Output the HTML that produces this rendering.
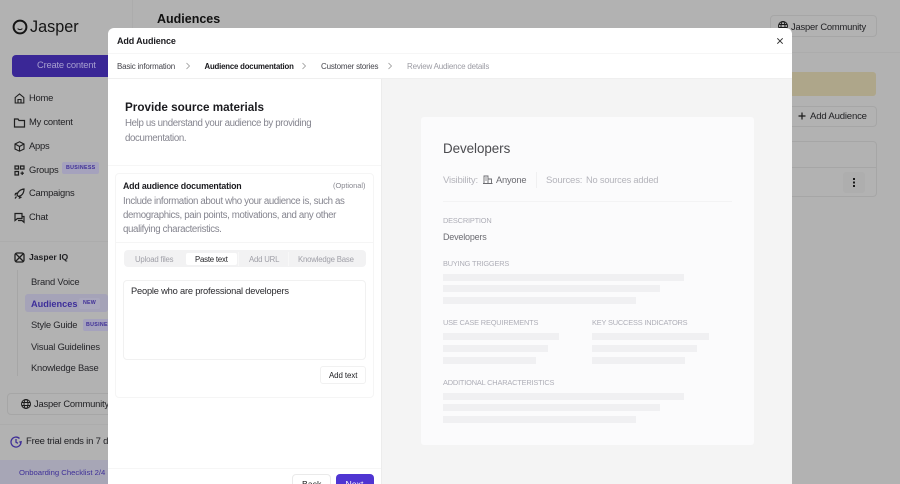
<!DOCTYPE html>
<html style="height:484px;overflow:hidden"><head><meta charset="utf-8"><style>
html,body{margin:0;padding:0}
body{width:900px;height:484px;overflow:hidden;font-family:"Liberation Sans",sans-serif;color:#232323}
#w{position:relative;width:900px;height:484px;overflow:hidden;background:#b2b2b2}
.a{position:absolute;white-space:nowrap;line-height:1}
.b{position:absolute;box-sizing:border-box}
.nav{font-size:9.4px;color:#1f1f22;letter-spacing:-.22px;left:29px}
.sub{font-size:9.4px;color:#26262a;letter-spacing:-.2px;left:31px}
.tab{font-size:8px;letter-spacing:-.2px;top:63px}
.in{font-size:7.8px;letter-spacing:-.2px;top:256px;color:#a0a0a8}
.gr{color:#85858f;font-size:9.7px;letter-spacing:-.36px}
.lab{font-size:7.4px;letter-spacing:-.18px;color:#aeaeb7}
.sk{position:absolute;background:#f0f0f2;height:7px}
svg{position:absolute;fill:none}
</style></head><body><div id="w">
<!-- background -->
<div class="b" style="left:132px;top:0;width:1px;height:484px;background:#acacac"></div>
<div class="b" style="left:133px;top:52px;width:767px;height:1px;background:#acacac"></div>
<div class="b" style="left:0;top:241px;width:133px;height:1px;background:#acacac"></div>
<div class="b" style="left:0;top:424px;width:133px;height:1px;background:#acacac"></div>
<svg style="left:12px;top:19px" width="16" height="16" viewBox="0 0 16 16"><circle cx="8" cy="8" r="6.4" stroke="#151515" stroke-width="2"/><path d="M5.6 9.6q2.4 2 4.8 0" stroke="#151515" stroke-width="1"/></svg>
<div class="a" style="left:30px;top:19px;font-size:16.2px;color:#141414">Jasper</div>
<div class="a" style="left:157px;top:12.5px;font-size:12.5px;font-weight:bold;color:#111">Audiences</div>
<div class="b" style="left:12px;top:55px;width:100px;height:22px;background:#3a2796;border-radius:4px"></div>
<div class="a" style="left:37px;top:60.3px;font-size:9.4px;letter-spacing:-.2px;color:#a79fd0">Create content</div>

<svg style="left:13px;top:92px" width="13" height="13" viewBox="0 0 13 13" stroke="#1f1f1f" stroke-width="1.1"><path d="M2.2 5.5 6.5 2l4.3 3.5V11H2.200zM5 11V7.500h3V11"/></svg>
<div class="a nav" style="top:93.3px">Home</div>
<svg style="left:13px;top:116px" width="13" height="13" viewBox="0 0 13 13" stroke="#1f1f1f" stroke-width="1.2"><path d="M1.500 3h3.500l1 1.500h5.500V11h-10z"/></svg>
<div class="a nav" style="top:117.3px">My content</div>
<svg style="left:13px;top:140px" width="13" height="13" viewBox="0 0 13 13" stroke="#1f1f1f" stroke-width="1.1"><path d="M6.500 1.800 11 4v5l-4.500 2.200L2 9V4zM2 4l4.500 2.500L11 4M6.500 6.500v4.700"/></svg>
<div class="a nav" style="top:141.3px">Apps</div>
<svg style="left:13px;top:164px" width="13" height="13" viewBox="0 0 13 13" stroke="#1f1f1f" stroke-width="1.2"><path d="M2 2h3.500v3H2zM7.500 2H11v3H7.500zM2 7.500h3.500V11H2zM7.500 9.200H11M9.200 7.500V11"/></svg>
<div class="a nav" style="top:165.3px">Groups</div>
<div class="b" style="left:62px;top:162px;width:37px;height:12px;background:#a5a2bd;border-radius:2px"></div>
<div class="a" style="left:66px;top:165.5px;font-size:5.3px;font-weight:bold;color:#3f2f97;letter-spacing:.3px">BUSINESS</div>
<svg style="left:13px;top:187px" width="13" height="13" viewBox="0 0 13 13" stroke="#1f1f1f" stroke-width="1.2"><path d="M11 2C7 2.500 4.500 5 4 8l1.500 1.500c3-.5 5.500-3 5.500-7.500zM4.500 6 2.500 6.500 2 8.500M7 9l-.5 2 2-.8M3.500 9.500 2 11.500"/></svg>
<div class="a nav" style="top:188.3px">Campaigns</div>
<svg style="left:13px;top:211px" width="13" height="13" viewBox="0 0 13 13" stroke="#1f1f1f" stroke-width="1.2"><path d="M2 2.500h7v5H4.500L2 9.500zM5 9.500h4l2 1.800V5.500H9.500"/></svg>
<div class="a nav" style="top:212.3px">Chat</div>

<svg style="left:13px;top:251px" width="13" height="13" viewBox="0 0 13 13" stroke="#1f1f1f" stroke-width="1.300"><rect x="2" y="2" width="9" height="9" rx="2"/><path d="M2.500 2.500l8 8M10.500 2.500l-8 8"/></svg>
<div class="a" style="left:29px;top:252.7px;font-size:8.6px;font-weight:bold;color:#1f1f22">Jasper IQ</div>
<div class="b" style="left:17px;top:270px;width:1px;height:106px;background:#a6a6a6"></div>
<div class="a sub" style="top:277px">Brand Voice</div>
<div class="b" style="left:25px;top:294px;width:83px;height:18px;background:#a5a3b8;border-radius:3px"></div>
<div class="a" style="left:31px;top:299.8px;font-size:9.2px;font-weight:bold;color:#3d2e9a">Audiences</div>
<div class="b" style="left:79px;top:298px;width:21px;height:11px;background:#aaa8bd;border-radius:2px"></div>
<div class="a" style="left:83px;top:301px;font-size:5.3px;font-weight:bold;color:#3f2f97;letter-spacing:.2px">NEW</div>
<div class="a sub" style="top:320px">Style Guide</div>
<div class="b" style="left:83px;top:319px;width:25px;height:12px;background:#a5a2bd;border-radius:2px 0 0 2px"></div>
<div class="a" style="left:86px;top:322.5px;font-size:5.3px;font-weight:bold;color:#3f2f97;letter-spacing:.3px">BUSINESS</div>
<div class="a sub" style="top:341.5px">Visual Guidelines</div>
<div class="a sub" style="top:363px">Knowledge Base</div>

<div class="b" style="left:7px;top:393px;width:110px;height:22px;border:1px solid #a6a6a6;border-radius:4px"></div>
<svg style="left:20px;top:398px" width="12" height="12" viewBox="0 0 12 12" stroke="#1a1a1a" stroke-width="1"><circle cx="6" cy="6" r="4.500"/><ellipse cx="6" cy="6" rx="2" ry="4.500"/><path d="M1.500 4.500h9M1.500 7.500h9"/></svg>
<div class="a" style="left:34px;top:399.3px;font-size:9.4px;letter-spacing:-.2px;color:#1f1f22">Jasper Community</div>
<svg style="left:9px;top:435px" width="14" height="14" viewBox="0 0 14 14" stroke="#3f2f97" stroke-width="1.300"><path d="M12 7a5 5 0 1 1-1.500-3.500M7 4v3.200l2 1.100M12 8.500l-1-1.500 1.800-.5"/></svg>
<div class="a" style="left:26px;top:436.8px;font-size:9.5px;letter-spacing:-.2px;color:#202024">Free trial ends in 7 days</div>
<div class="b" style="left:0;top:460px;width:108px;height:24px;background:#a7a6b6"></div>
<div class="a" style="left:19px;top:469px;font-size:7.7px;color:#3f3098">Onboarding Checklist 2/4</div>

<div class="b" style="left:770px;top:15px;width:107px;height:22px;border:1px solid #a6a6a6;border-radius:4px"></div>
<svg style="left:777px;top:20px" width="12" height="12" viewBox="0 0 12 12" stroke="#1a1a1a" stroke-width="1"><circle cx="6" cy="6" r="4.500"/><ellipse cx="6" cy="6" rx="2" ry="4.500"/><path d="M1.500 4.500h9M1.500 7.500h9"/></svg>
<div class="a" style="left:791px;top:21.8px;font-size:9.4px;letter-spacing:-.2px;color:#1f1f22">Jasper Community</div>
<div class="b" style="left:780px;top:72px;width:96px;height:24px;background:#aea68a;border-radius:3px"></div>
<div class="b" style="left:780px;top:106px;width:97px;height:21px;border:1px solid #a6a6a6;border-radius:4px"></div>
<svg style="left:796px;top:110px" width="12" height="12" viewBox="0 0 12 12" stroke="#1a1a1a" stroke-width="1.200"><path d="M6 2.500v7M2.500 6h7"/></svg>
<div class="a" style="left:810px;top:112px;font-size:9.6px;letter-spacing:-.2px;color:#1f1f22">Add Audience</div>
<div class="b" style="left:770px;top:141px;width:107px;height:56px;border:1px solid #a6a6a6;border-radius:4px"></div>
<div class="b" style="left:780px;top:167px;width:97px;height:1px;background:#a6a6a6"></div>
<div class="b" style="left:843px;top:172px;width:22px;height:21px;background:#aeaeae;border-radius:3px"></div>
<div class="b" style="left:853px;top:178px;width:2px;height:2px;background:#1a1a1a;box-shadow:0 3.500px 0 #1a1a1a,0 7px 0 #1a1a1a"></div>

<!-- modal -->
<div class="b" style="left:108px;top:28px;width:684px;height:456px;background:#fff;border-radius:6px 6px 0 0;overflow:hidden">
<div class="b" style="left:0;top:25px;width:684px;height:1px;background:#f6f6f6"></div>
<div class="b" style="left:0;top:50px;width:684px;height:1px;background:#efefef"></div>
<div class="b" style="left:273px;top:51px;width:411px;height:405px;background:#f4f4f4;border-left:1px solid #ececec"></div>
</div>
<div class="a" style="left:117px;top:36.5px;font-size:9px;letter-spacing:-.12px;font-weight:bold;color:#1b1b1f">Add Audience</div>
<svg style="left:775px;top:36px" width="10" height="10" viewBox="0 0 10 10" stroke="#333" stroke-width="1"><path d="M2.300 2.300l5.400 5.400M7.700 2.300l-5.400 5.400"/></svg>

<div class="a tab" style="left:117px;color:#45454c">Basic information</div>
<svg style="left:184px;top:62px" width="8" height="8" viewBox="0 0 8 8" stroke="#999" stroke-width=".8"><path d="M2.500 1 5.500 4 2.500 7"/></svg>
<div class="a tab" style="left:204.5px;font-weight:bold;color:#17171b;font-size:7.8px;letter-spacing:-.18px">Audience documentation</div>
<svg style="left:300px;top:62px" width="8" height="8" viewBox="0 0 8 8" stroke="#999" stroke-width=".8"><path d="M2.500 1 5.500 4 2.500 7"/></svg>
<div class="a tab" style="left:321px;color:#45454c">Customer stories</div>
<svg style="left:386px;top:62px" width="8" height="8" viewBox="0 0 8 8" stroke="#999" stroke-width=".8"><path d="M2.500 1 5.500 4 2.500 7"/></svg>
<div class="a tab" style="left:407px;color:#9c9ca4">Review Audience details</div>

<!-- left panel -->
<div class="a" style="left:125px;top:102px;font-size:11.7px;font-weight:bold;color:#1b1b1f">Provide source materials</div>
<div class="a gr" style="left:125px;top:119.3px">Help us understand your audience by providing</div>
<div class="a gr" style="left:125px;top:133.8px">documentation.</div>
<div class="b" style="left:108px;top:165px;width:273px;height:1px;background:#f6f6f6"></div>
<div class="b" style="left:115px;top:173px;width:259px;height:225px;border:1px solid #f5f5f5;border-radius:4px"></div>
<div class="a" style="left:123px;top:181.5px;font-size:8.8px;letter-spacing:-.18px;font-weight:bold;color:#1b1b1f">Add audience documentation</div>
<div class="a" style="left:333px;top:182.3px;font-size:7.4px;color:#888890">(Optional)</div>
<div class="a gr" style="left:123px;top:196.8px">Include information about who your audience is, such as</div>
<div class="a gr" style="left:123px;top:211.3px">demographics, pain points, motivations, and any other</div>
<div class="a gr" style="left:123px;top:225.3px">qualifying characteristics.</div>
<div class="b" style="left:116px;top:242px;width:257px;height:1px;background:#f5f5f5"></div>
<div class="b" style="left:124px;top:250px;width:242px;height:17px;background:#f2f2f3;border-radius:4px"></div>
<div class="b" style="left:186px;top:253px;width:51px;height:12px;background:#fff;border-radius:2px"></div>
<div class="b" style="left:238px;top:252px;width:1px;height:14px;background:#f8f8f8"></div>
<div class="b" style="left:288px;top:252px;width:1px;height:14px;background:#f8f8f8"></div>
<div class="a in" style="left:135px">Upload files</div>
<div class="a in" style="left:195px;color:#1f1f23">Paste text</div>
<div class="a in" style="left:249px">Add URL</div>
<div class="a in" style="left:298px">Knowledge Base</div>
<div class="b" style="left:123px;top:280px;width:243px;height:80px;border:1px solid #f1f1f1;border-radius:4px"></div>
<div class="a" style="left:131px;top:287.3px;font-size:9.3px;letter-spacing:-.2px;color:#2a2a2e">People who are professional developers</div>
<div class="b" style="left:320px;top:366px;width:46px;height:18px;border:1px solid #f1f1f1;border-radius:3px"></div>
<div class="a" style="left:329px;top:371.7px;font-size:7.9px;letter-spacing:-.08px;color:#1f1f23">Add text</div>
<div class="b" style="left:108px;top:468px;width:273px;height:1px;background:#f6f6f6"></div>
<div class="b" style="left:292px;top:474px;width:39px;height:20px;background:#fff;border:1px solid #eaeaea;border-radius:4px"></div>
<div class="a" style="left:302px;top:480px;font-size:8.7px;color:#222">Back</div>
<div class="b" style="left:336px;top:474px;width:38px;height:20px;background:#4f35d2;border-radius:4px"></div>
<div class="a" style="left:345.5px;top:480px;font-size:8.7px;color:#fff">Next</div>

<!-- right preview card -->
<div class="b" style="left:421px;top:117px;width:333px;height:328px;background:#fbfbfc;border-radius:3px"></div>
<div class="a" style="left:443px;top:142px;font-size:13.4px;letter-spacing:-.05px;color:#4b4b4f">Developers</div>
<div class="a" style="left:443px;top:176px;font-size:9.6px;letter-spacing:-.2px;color:#b4b4bb">Visibility:</div>
<svg style="left:482px;top:174px" width="11" height="11" viewBox="0 0 11 11" stroke="#6a6a6f" stroke-width=".9"><path d="M2 9.500V2h4v7.500zM6 5h3.500v4.500M1 9.500h9.500M3.300 4h1.400M3.300 6h1.400"/></svg>
<div class="a" style="left:496px;top:176px;font-size:9.3px;letter-spacing:-.2px;color:#6c6c72">Anyone</div>
<div class="b" style="left:536px;top:172px;width:1px;height:16px;background:#f0f0f1"></div>
<div class="a" style="left:546px;top:176px;font-size:9.6px;letter-spacing:-.2px;color:#b4b4bb">Sources:</div>
<div class="a" style="left:586px;top:176px;font-size:9.3px;letter-spacing:-.2px;color:#b4b4bb">No sources added</div>
<div class="b" style="left:443px;top:201px;width:289px;height:1px;background:#f3f3f4"></div>
<div class="a lab" style="left:443px;top:216.5px">DESCRIPTION</div>
<div class="a" style="left:443px;top:233.2px;font-size:9px;letter-spacing:-.2px;color:#6c6c72">Developers</div>
<div class="a lab" style="left:443px;top:259.5px">BUYING TRIGGERS</div>
<div class="sk" style="left:443px;top:273.5px;width:241px"></div>
<div class="sk" style="left:443px;top:285px;width:217px"></div>
<div class="sk" style="left:443px;top:297px;width:193px"></div>
<div class="a lab" style="left:443px;top:319px">USE CASE REQUIREMENTS</div>
<div class="a lab" style="left:592px;top:319px">KEY SUCCESS INDICATORS</div>
<div class="sk" style="left:443px;top:333px;width:116px"></div>
<div class="sk" style="left:443px;top:345px;width:104.5px"></div>
<div class="sk" style="left:443px;top:356.5px;width:93px"></div>
<div class="sk" style="left:592px;top:333px;width:116.5px"></div>
<div class="sk" style="left:592px;top:345px;width:105px"></div>
<div class="sk" style="left:592px;top:356.5px;width:93px"></div>
<div class="a lab" style="left:443px;top:378.5px">ADDITIONAL CHARACTERISTICS</div>
<div class="sk" style="left:443px;top:392.5px;width:241px"></div>
<div class="sk" style="left:443px;top:404px;width:217px"></div>
<div class="sk" style="left:443px;top:416px;width:193px"></div>
</div></body></html>
